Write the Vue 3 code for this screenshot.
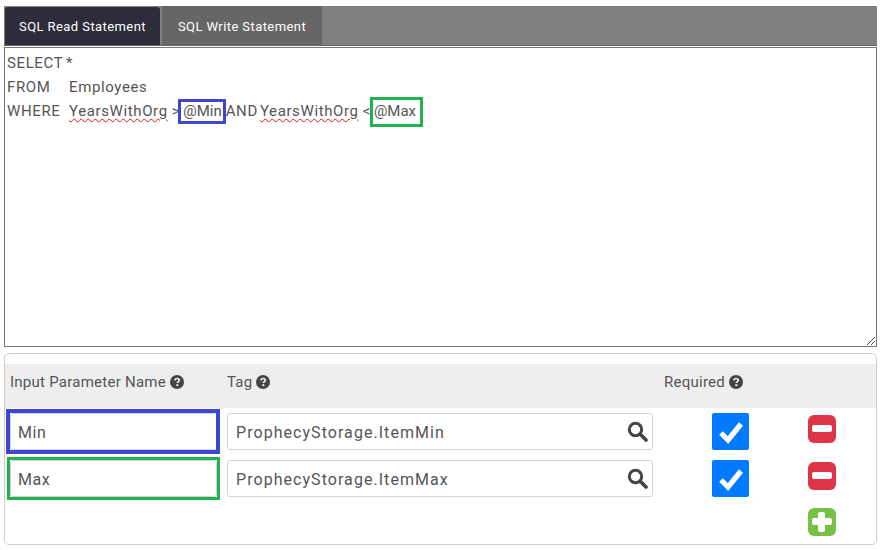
<script setup>
const rows = [
  { name: 'Min', tag: 'ProphecyStorage.ItemMin', tone: 'blue' },
  { name: 'Max', tag: 'ProphecyStorage.ItemMax', tone: 'green' }
]
const heads = ['Input Parameter Name', 'Tag', 'Required']
</script>

<template>
  <div class="page">
    <div class="tabs">
      <div class="tab active">SQL Read Statement</div>
      <div class="tab">SQL Write Statement</div>
    </div>
    <div class="editor">
      <div class="line"><span class="kw">SELECT</span><span class="star">*</span></div>
      <div class="line"><span class="kw">FROM</span><span>Employees</span></div>
      <div class="line">
        <span class="kw">WHERE</span><span class="err">YearsWithOrg</span><span class="op">&gt;</span><span class="mark m-blue">@Min</span><span class="and">AND</span><span class="err">YearsWithOrg</span><span class="op">&lt;</span><span class="mark m-green">@Max</span>
      </div>
      <svg class="grip" width="10" height="10" viewBox="0 0 10 10"><path d="M9 1 1 9M9 5 5 9" stroke="#555" fill="none"/></svg>
    </div>
    <div class="panel">
      <div class="head">
        <div v-for="(h, i) in heads" :key="h" class="hcell" :class="'c' + i">
          {{ h }}
          <svg class="help" width="14" height="14" viewBox="0 0 14 14"><circle cx="7" cy="7" r="7" fill="#444"/><path d="M4.9 5.4C5 4.2 5.9 3.5 7.1 3.5 8.4 3.5 9.3 4.3 9.3 5.3 9.3 6.7 7.3 6.7 7.3 8" fill="none" stroke="#eee" stroke-width="1.7"/><rect x="6.3" y="9.2" width="2" height="1.9" fill="#eee"/></svg>
        </div>
      </div>
      <div v-for="r in rows" :key="r.name" class="row">
        <div class="field name" :class="'f-' + r.tone">{{ r.name }}</div>
        <div class="field tag">
          <span>{{ r.tag }}</span>
          <svg width="21" height="21" viewBox="0 0 21 21"><circle cx="8.5" cy="8.5" r="6.2" fill="none" stroke="#444" stroke-width="3"/><path d="m13.5 13.5 5.5 5.5" stroke="#444" stroke-width="3.6" stroke-linecap="round"/></svg>
        </div>
        <div class="check">
          <svg width="26" height="24" viewBox="0 0 26 24"><path d="m3 13 7 7L23 4" fill="none" stroke="#fff" stroke-width="5.2"/></svg>
        </div>
        <div class="act minus"><i></i></div>
      </div>
      <div class="addrow">
        <div class="act plus"><i></i><b></b></div>
      </div>
    </div>
  </div>
</template>

<style scoped>
.page {
  width: 873px;
  margin-left: 4px;
  padding-top: 6px;
  font-family: Roboto, "Noto Sans", sans-serif;
  color: #555;
}
.tabs {
  display: flex;
  height: 40px;
  background: #808080;
  padding: 1px 0 1px 1px;
  box-sizing: border-box;
  border-bottom: 1px solid #666;
  gap: 2px;
}
.tab {
  width: 160px;
  background: #666;
  color: #fff;
  font-size: 13px;
  line-height: 41px;
  letter-spacing: .42px;
  text-align: center;
  margin-top: -1px;
  height: 40px;
}
.tab.active {
  width: 155px;
  margin-top: 0;
  height: 38px;
  line-height: 39px;
  background: #2d2c3a;
  border-radius: 3px 3px 0 0;
}
.editor {
  position: relative;
  height: 300px;
  margin-top: 1px;
  box-sizing: border-box;
  border: 1px solid #767676;
  padding: 3px 2px;
  font-size: 15px;
  line-height: 24px;
  letter-spacing: .62px;
  color: #555;
}
.line {
  white-space: pre;
}
.kw {
  display: inline-block;
  width: 62px;
}
.star {
  margin-left: -3px;
}
.err {
  text-decoration: underline wavy #e11;
  text-decoration-thickness: 1px;
  text-underline-offset: 2px;
}
.op {
  margin: 0 3px 0 4px;
}
.and {
  margin: 0 2px 0 4px;
}
.mark {
  position: relative;
  letter-spacing: 0;
}
.mark::after {
  content: "";
  position: absolute;
  box-sizing: border-box;
  border: 3px solid;
}
.m-blue::after {
  left: -5px;
  right: -4px;
  top: -3px;
  bottom: -4px;
  border-color: #3f48cc;
}
.m-green::after {
  left: -4px;
  right: -7px;
  top: -5px;
  bottom: -7px;
  border-color: #22b14c;
}
.grip {
  position: absolute;
  right: 0;
  bottom: 0;
}
.panel {
  margin-top: 6px;
  height: 192px;
  box-sizing: border-box;
  border: 1px solid #ccc;
  border-radius: 5px;
  padding-top: 10px;
  font-size: 15px;
  letter-spacing: .25px;
}
.head {
  display: flex;
  height: 44px;
  background: #eee;
  align-items: center;
  margin-bottom: 5px;
}
.hcell {
  display: flex;
  align-items: center;
  gap: 4px;
  margin-top: -8px;
}
.c0 { width: 218px; padding-left: 5px; box-sizing: border-box; }
.c1 { width: 441px; padding-left: 4px; box-sizing: border-box; }
.row {
  display: flex;
  align-items: flex-start;
  height: 47px;
}
.field {
  box-sizing: border-box;
  height: 37px;
  background: #fff;
  border: 1px solid #ced4da;
  border-radius: 3px;
  font-size: 16px;
  line-height: 37px;
  letter-spacing: .58px;
  padding-left: 8px;
  color: #555;
}
.name {
  position: relative;
  width: 207px;
  margin-left: 5px;
  padding-left: 7px;
}
.name::after {
  content: "";
  position: absolute;
  box-sizing: border-box;
  pointer-events: none;
}
.f-blue::after {
  inset: -5px -4px -5px -5px;
  border: 4px solid #3f48cc;
}
.f-green::after {
  inset: -4px -4px -4px -4px;
  border: 3px solid #22b14c;
}
.tag {
  width: 426px;
  margin-left: 10px;
  display: flex;
  justify-content: space-between;
  align-items: center;
  padding-right: 4px;
  letter-spacing: 1.05px;
}
.tag span {
  margin-top: 1px;
}
.check {
  width: 37px;
  height: 37px;
  margin-left: 59px;
  background: #007bff;
  border-radius: 2px;
  display: flex;
  align-items: center;
  justify-content: center;
}
.act {
  position: relative;
  width: 28px;
  height: 28px;
  border-radius: 6px;
  margin-left: 59px;
}
.minus { background: #dc3545; margin-top: 2px; }
.plus { background: #76c043; }
.act i {
  position: absolute;
  left: 4px;
  right: 4px;
  top: 10px;
  height: 7px;
  background: #fff;
  border-radius: 2px;
}
.act b {
  position: absolute;
  top: 4px;
  bottom: 4px;
  left: 10px;
  width: 7px;
  background: #fff;
  border-radius: 2px;
}
.addrow {
  display: flex;
  justify-content: flex-end;
  padding-right: 40px;
  margin-top: 1px;
}
</style>
